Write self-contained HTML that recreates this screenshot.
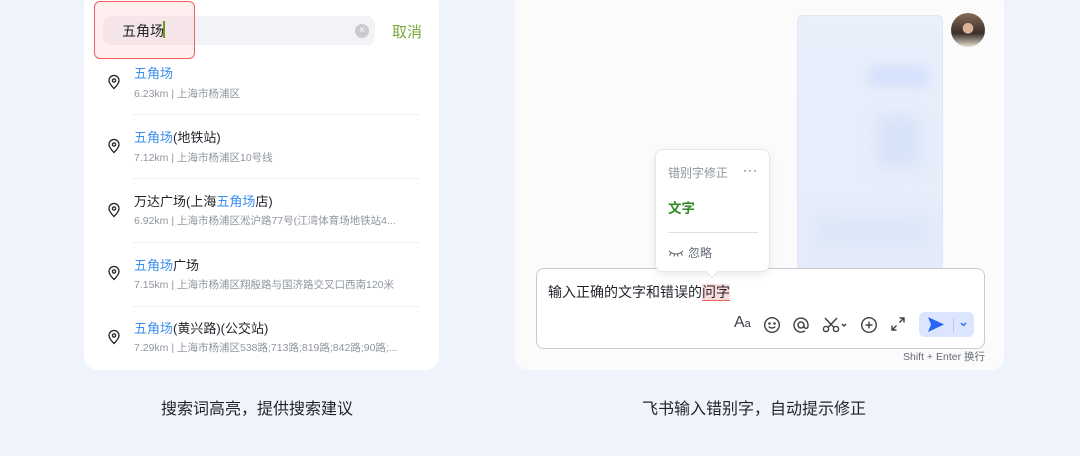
<!DOCTYPE html>
<html><head><meta charset="utf-8"><style>
*{margin:0;padding:0;box-sizing:border-box}
body{width:1080px;height:456px;background:#eff3fb;font-family:"Liberation Sans","Noto Sans CJK SC",sans-serif;position:relative;overflow:hidden;color:#1f2329}
.abs{position:absolute}
.card{position:absolute;left:84px;top:-10px;width:355px;height:380px;background:#fff;border-radius:14px}
.t{position:absolute;left:134px;font-size:13px;color:#1f2329;white-space:nowrap}
.s{position:absolute;left:134px;font-size:10.5px;color:#8f959e;white-space:nowrap}
.b{color:#3b8ef0}
.hr{position:absolute;left:133px;width:287px;height:1px;background:#eff0f2}
.pin{position:absolute;left:107px}
.cap{position:absolute;top:395px;font-size:16px;color:#1f2329;white-space:nowrap}
</style></head><body>
<div class="card"></div>
<div class="abs" style="left:103px;top:16px;width:272px;height:29px;background:#f2f3f7;border-radius:8px"></div>
<div class="abs" style="left:94px;top:1px;width:101px;height:58px;border:1.5px solid #f5605a;border-radius:6px;background:rgba(255,180,180,0.22)"></div>
<div class="abs" style="left:122px;top:21px;font-size:14px;color:#1f2329">五角场</div>
<div class="abs" style="left:163px;top:21px;width:1.5px;height:17px;background:#6a9a1f"></div>
<div class="abs" style="left:355px;top:24px;width:14px;height:14px;border-radius:50%;background:#c9cbd0;color:#fff;font-size:10px;line-height:14px;text-align:center">×</div>
<div class="abs" style="left:392px;top:21px;font-size:15px;color:#78aa3c">取消</div>

<svg class="pin" style="top:74px" width="14" height="16" viewBox="0 0 14 16"><path d="M7 14.5C4 11.5 2 9 2 6.5a5 5 0 0 1 10 0C12 9 10 11.5 7 14.5z" fill="none" stroke="#1f2329" stroke-width="1.3"/><circle cx="7" cy="6.5" r="1.6" fill="none" stroke="#1f2329" stroke-width="1.3"/></svg>
<div class="t b" style="top:63px">五角场</div>
<div class="s" style="top:86px">6.23km | 上海市杨浦区</div>
<div class="hr" style="top:114px"></div>

<svg class="pin" style="top:138px" width="14" height="16" viewBox="0 0 14 16"><path d="M7 14.5C4 11.5 2 9 2 6.5a5 5 0 0 1 10 0C12 9 10 11.5 7 14.5z" fill="none" stroke="#1f2329" stroke-width="1.3"/><circle cx="7" cy="6.5" r="1.6" fill="none" stroke="#1f2329" stroke-width="1.3"/></svg>
<div class="t" style="top:127px"><span class="b">五角场</span>(地铁站)</div>
<div class="s" style="top:150px">7.12km | 上海市杨浦区10号线</div>
<div class="hr" style="top:178px"></div>

<svg class="pin" style="top:202px" width="14" height="16" viewBox="0 0 14 16"><path d="M7 14.5C4 11.5 2 9 2 6.5a5 5 0 0 1 10 0C12 9 10 11.5 7 14.5z" fill="none" stroke="#1f2329" stroke-width="1.3"/><circle cx="7" cy="6.5" r="1.6" fill="none" stroke="#1f2329" stroke-width="1.3"/></svg>
<div class="t" style="top:191px">万达广场(上海<span class="b">五角场</span>店)</div>
<div class="s" style="top:213px">6.92km | 上海市杨浦区淞沪路77号(江湾体育场地铁站4...</div>
<div class="hr" style="top:242px"></div>

<svg class="pin" style="top:265px" width="14" height="16" viewBox="0 0 14 16"><path d="M7 14.5C4 11.5 2 9 2 6.5a5 5 0 0 1 10 0C12 9 10 11.5 7 14.5z" fill="none" stroke="#1f2329" stroke-width="1.3"/><circle cx="7" cy="6.5" r="1.6" fill="none" stroke="#1f2329" stroke-width="1.3"/></svg>
<div class="t" style="top:255px"><span class="b">五角场</span>广场</div>
<div class="s" style="top:277px">7.15km | 上海市杨浦区翔殷路与国济路交叉口西南120米</div>
<div class="hr" style="top:306px"></div>

<svg class="pin" style="top:329px" width="14" height="16" viewBox="0 0 14 16"><path d="M7 14.5C4 11.5 2 9 2 6.5a5 5 0 0 1 10 0C12 9 10 11.5 7 14.5z" fill="none" stroke="#1f2329" stroke-width="1.3"/><circle cx="7" cy="6.5" r="1.6" fill="none" stroke="#1f2329" stroke-width="1.3"/></svg>
<div class="t" style="top:318px"><span class="b">五角场</span>(黄兴路)(公交站)</div>
<div class="s" style="top:340px">7.29km | 上海市杨浦区538路;713路;819路;842路;90路;...</div>

<div class="cap" style="left:161px">搜索词高亮，提供搜索建议</div>
<div class="cap" style="left:642px">飞书输入错别字，自动提示修正</div>

<!-- right -->
<div class="abs" style="left:515px;top:-10px;width:489px;height:380px;background:#fbfbfc;border-radius:12px"></div>
<div class="abs" style="left:797px;top:15px;width:146px;height:260px;border-radius:6px;border:1px solid #e3e6ee;background:linear-gradient(#e9effb,#e4ecfb);overflow:hidden">
<div class="abs" style="left:70px;top:50px;width:60px;height:20px;background:#d3e0fb;filter:blur(6px)"></div>
<div class="abs" style="left:80px;top:100px;width:40px;height:50px;background:#d6e2f8;filter:blur(8px)"></div>
<div class="abs" style="left:20px;top:200px;width:110px;height:30px;background:#dde6f7;filter:blur(8px)"></div>
</div>
<div class="abs" style="left:951px;top:13px;width:34px;height:34px;border-radius:50%;background:radial-gradient(circle at 50% 45%,#d9b39a 0 20%,transparent 22%),linear-gradient(#8a6a58,#3a2f2c 60%,#e8e0d0);"></div>

<div class="abs" style="left:536px;top:268px;width:449px;height:81px;border:1px solid #c7cbd2;border-radius:8px;background:#fff"></div>
<div class="abs" style="left:548px;top:282px;font-size:14px;color:#1f2329;white-space:nowrap">输入正确的文字和错误的<span style="background:#fbdcdc;border-bottom:1.5px solid #e9605c">问字</span></div>
<div class="abs" style="left:734px;top:314px;font-size:16px;color:#3c4047">A<span style="font-size:11px">a</span></div>
<svg class="abs" style="left:763px;top:316px" width="18" height="18" viewBox="0 0 18 18" fill="none" stroke="#3c4047" stroke-width="1.4"><circle cx="9" cy="9" r="7.3"/><circle cx="6.5" cy="7.5" r=".6"/><circle cx="11.5" cy="7.5" r=".6"/><path d="M5.8 10.5c1.5 2 4.9 2 6.4 0"/></svg>
<svg class="abs" style="left:792px;top:316px" width="18" height="18" viewBox="0 0 18 18" fill="none" stroke="#3c4047" stroke-width="1.4"><circle cx="9" cy="9" r="3"/><path d="M12 9v1.3a2 2 0 0 0 4 0V9a7 7 0 1 0-3 5.8"/></svg>
<svg class="abs" style="left:822px;top:316px" width="28" height="18" viewBox="0 0 28 18" fill="none" stroke="#3c4047" stroke-width="1.4"><circle cx="4" cy="13" r="2.6"/><circle cx="14" cy="13" r="2.6"/><path d="M6 11.5L15 2M12 11.5L3 2"/><path d="M20 8l2 2 2-2"/></svg>
<svg class="abs" style="left:860px;top:316px" width="18" height="18" viewBox="0 0 18 18" fill="none" stroke="#3c4047" stroke-width="1.4"><circle cx="9" cy="9" r="7.3"/><path d="M9 5.5v7M5.5 9h7"/></svg>
<svg class="abs" style="left:890px;top:316px" width="16" height="16" viewBox="0 0 16 16" fill="none" stroke="#3c4047" stroke-width="1.4"><path d="M9.5 2H14v4.5M14 2L9.5 6.5M6.5 14H2V9.5M2 14l4.5-4.5"/></svg>
<div class="abs" style="left:919px;top:312px;width:55px;height:25px;background:#dbe6fe;border-radius:6px"></div>
<svg class="abs" style="left:927px;top:316px" width="18" height="17" viewBox="0 0 18 17"><path d="M1 1l16 7.5L1 16l3-7.5z" fill="#2a62f5"/></svg>
<div class="abs" style="left:953px;top:318px;width:1px;height:14px;background:#b7c7ee"></div>
<svg class="abs" style="left:959px;top:320px" width="9" height="8" viewBox="0 0 9 8"><path d="M2 3l2.5 2.5L7 3" fill="none" stroke="#2a62f5" stroke-width="1.3"/></svg>
<div class="abs" style="left:903px;top:349px;font-size:10.5px;color:#646a73;white-space:nowrap">Shift + Enter 换行</div>

<div class="abs" style="left:655px;top:149px;width:115px;height:123px;background:#fff;border:1px solid #e4e6ea;border-radius:8px;box-shadow:0 3px 8px rgba(0,0,0,0.08)"></div>
<div class="abs" style="left:707px;top:266px;width:10px;height:10px;background:#fff;transform:rotate(45deg);border-right:1px solid #e4e6ea;border-bottom:1px solid #e4e6ea"></div>
<div class="abs" style="left:668px;top:164px;font-size:12px;color:#8f959e">错别字修正</div>
<div class="abs" style="left:743px;top:163px;font-size:12px;color:#3c4047;letter-spacing:1px">···</div>
<div class="abs" style="left:668px;top:197px;font-size:13.5px;color:#2e8a22;font-weight:bold">文字</div>
<div class="abs" style="left:668px;top:232px;width:90px;height:1px;background:#dee0e3"></div>
<svg class="abs" style="left:668px;top:249px" width="16" height="8" viewBox="0 0 16 8" fill="none" stroke="#646a73" stroke-width="1.1"><path d="M1 2c4 4 10 4 14 0M3 4L1.5 6.5M6.5 5.3L6 7.5M9.5 5.3L10 7.5M13 4l1.5 2.5"/></svg>
<div class="abs" style="left:688px;top:244px;font-size:12px;color:#646a73">忽略</div>
</body></html>
